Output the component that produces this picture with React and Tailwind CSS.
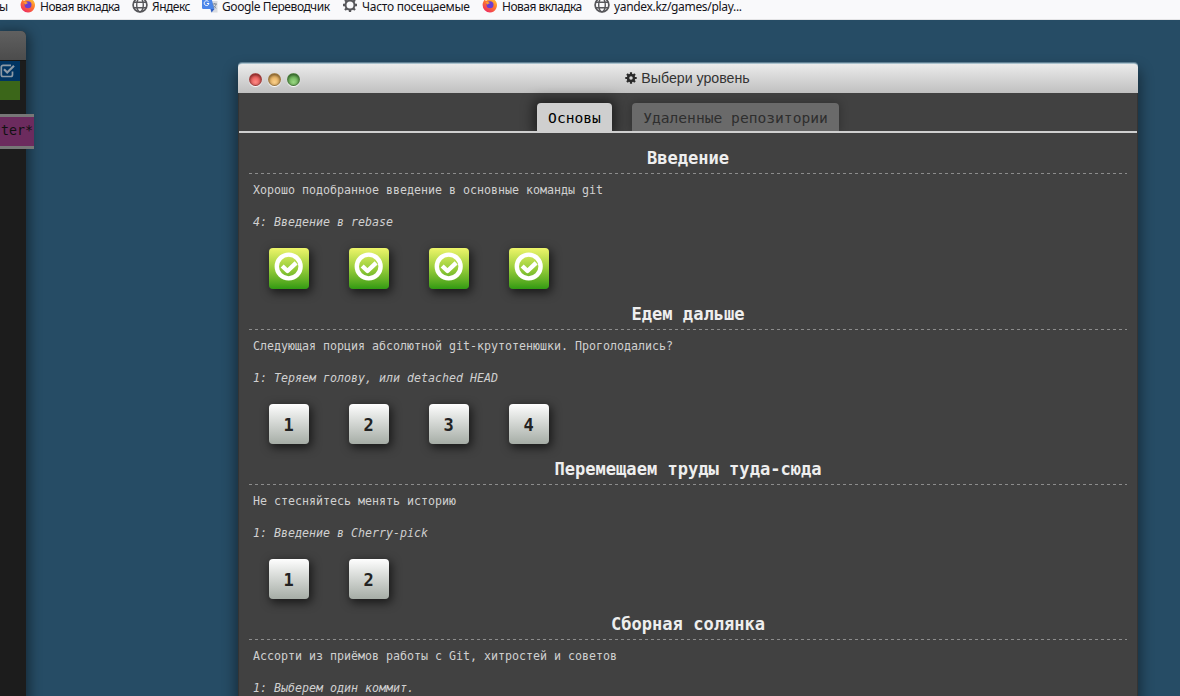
import React from "react";

const Firefox = () => (
  <svg width="16" height="16" viewBox="0 0 16 16" className="shrink-0">
    <defs>
      <linearGradient id="fx" x1="0.8" y1="0" x2="0.2" y2="1">
        <stop offset="0" stopColor="#ffd23c" />
        <stop offset="0.45" stopColor="#ff7a2c" />
        <stop offset="1" stopColor="#ec2466" />
      </linearGradient>
    </defs>
    <path d="M8 15.500A7.400 7.400 0 0 1 .6 8C.6 5.600 1.700 4 2.600 2.600L4 4c1-1 2.500-1.200 4-1L10.500.3c.5 1.700 1.800 2 3.200 3.700A7.400 7.400 0 0 1 8 15.500z" fill="url(#fx)" />
    <circle cx="8" cy="7.800" r="3.500" fill="#6a3fd0" />
    <path d="M3.500 5.500c1.500-.8 3.500-.5 4.500.7-1.500.1-2 .9-2.200 1.500z" fill="#ff9b30" />
  </svg>
);

const Globe = () => (
  <svg width="16" height="16" viewBox="0 0 16 16" className="shrink-0" fill="none" stroke="#57575b" strokeWidth="1.400">
    <circle cx="8" cy="8" r="6.900" strokeWidth="1.700" />
    <ellipse cx="8" cy="8" rx="3.300" ry="6.900" />
    <path d="M1.800 5.300h12.400M1.800 10.700h12.400" />
  </svg>
);

const Translate = () => (
  <svg width="16" height="16" viewBox="0 0 16 16" className="shrink-0">
    <path d="M6 4h9.500v11.500H9z" fill="#d9dbe0" />
    <path d="M0 0h9l3.500 12H1.200A1.200 1.200 0 0 1 0 10.800z" fill="#4b86ea" />
    <path d="M8.500 12h4l-3 3.500z" fill="#2f5fc4" />
    <path d="M6.600 4.800A2.400 2.400 0 1 0 7 6.500H4.900" fill="none" stroke="#fff" strokeWidth="1" />
    <path d="M10.500 7h4.500M12.700 6v1M14 7c-.4 2-1.500 3.200-2.700 4M11.500 8.500c.7 1.300 1.700 2 2.800 2.800" fill="none" stroke="#7d8794" strokeWidth=".9" />
  </svg>
);

const GearOutline = () => (
  <svg width="16" height="16" viewBox="0 0 16 16" className="shrink-0" fill="none" stroke="#57575b">
    <circle cx="8" cy="8" r="4.500" strokeWidth="2" />
    <path d="M8 1v2.500M8 12.500v2.500M1 8h2.500M12.500 8h2.500M3 3l1.800 1.800M11.200 11.200l1.800 1.800M3 13l1.800-1.800M11.200 4.800l1.800-1.800" strokeWidth="2.300" />
  </svg>
);

const GearSolid = () => (
  <svg width="12" height="12" viewBox="0 0 12 12" className="shrink-0" fill="none" stroke="#2a2a2a">
    <circle cx="6" cy="6" r="3" strokeWidth="2.500" />
    <path d="M6 .3v2M6 9.700v2M.3 6h2M9.700 6h2M2 2l1.400 1.400M8.600 8.600L10 10M2 10l1.400-1.400M8.600 3.400L10 2" strokeWidth="2.200" />
  </svg>
);

const bookmarks = [
  { icon: <Firefox />, text: "Новая вкладка", box: "w-[112px] tracking-[-0.52px]" },
  { icon: <Globe />, text: "Яндекс", box: "w-[70px] tracking-[-0.5px]" },
  { icon: <Translate />, text: "Google Переводчик", box: "w-[140px] tracking-[-0.4px]" },
  { icon: <GearOutline />, text: "Часто посещаемые", box: "w-[140px] tracking-[-0.28px]" },
  { icon: <Firefox />, text: "Новая вкладка", box: "w-[112px] tracking-[-0.52px]" },
  { icon: <Globe />, text: "yandex.kz/games/play...", box: "w-[160px] tracking-[-0.32px]" },
];

function Bookmarks() {
  return (
    <div className="flex h-5 shrink-0 items-start whitespace-nowrap border-b border-[#e4e4e6] bg-[#f9f9fb] text-[12px] leading-[13px] text-[#15141a] [font-family:'Noto_Sans','Open_Sans',sans-serif]">
      <span className="w-5 shrink-0 -ml-px mr-px">ы</span>
      {bookmarks.map((b, i) => (
        <div key={i} className={`flex shrink-0 items-start gap-1 ${b.box}`}>
          <span className="-mt-[3px]">{b.icon}</span>
          <span>{b.text}</span>
        </div>
      ))}
    </div>
  );
}

function LeftTerminal() {
  return (
    <div className="flex w-[34px] shrink-0 flex-col pt-[11px]">
      <div className="flex w-[26px] grow flex-col rounded-tr-[5px] bg-[#1c1c1c] shadow-[0_4px_12px_4px_rgba(0,0,0,0.42)]">
        <div className="h-[30px] shrink-0 rounded-tr-[5px] border-b border-[#161616] bg-gradient-to-b from-[#606060] to-[#4c4c4c]" />
        <div className="flex h-5 w-5 shrink-0 items-center bg-[#003462]">
          <svg width="17" height="16" viewBox="0 0 17 16" fill="none" stroke="#8d9aa6" strokeWidth="1.700">
            <path d="M12.500 8.500v3.300a1.700 1.700 0 0 1-1.700 1.700H3a1.700 1.700 0 0 1-1.700-1.700V4A1.700 1.700 0 0 1 3 2.300h8" />
            <path d="M4 6.300l3.200 3.200 6.800-6.800" strokeWidth="2.200" />
          </svg>
        </div>
        <div className="h-[19px] w-5 shrink-0 bg-[#3b6619]" />
        <div className="mt-[14px] flex h-[35px] w-[34px] shrink-0 items-center border-y-[3px] border-[#777] bg-[#6c2b5e] pl-px text-[13.300px] leading-none text-[#111]">
          <span className="-mt-px">ter*</span>
        </div>
      </div>
    </div>
  );
}

const Done = () => (
  <div className="flex h-[41px] w-10 justify-center rounded-[4px] bg-gradient-to-b from-[#eef56a] via-[#97cd3a] to-[#2f9a12] pt-[4px] shadow-[2px_3px_10px_1px_rgba(0,0,0,0.6)]">
    <svg width="30" height="30" viewBox="0 0 30 30" fill="none" stroke="#fff">
      <circle cx="14.700" cy="14.500" r="11.900" strokeWidth="4.400" />
      <path d="M8.200 14l5.300 5 8.600-8.100" strokeWidth="4.400" strokeLinejoin="round" />
    </svg>
  </div>
);

const Level = ({ n }) => (
  <div className="flex h-10 w-10 items-center justify-center rounded-[4px] bg-gradient-to-b from-[#fefefe] to-[#a6ada6] pt-0.5 pr-px text-[17px] font-bold leading-none text-[#222] shadow-[2px_3px_10px_1px_rgba(0,0,0,0.6)]">
    {n}
  </div>
);

const sections = [
  { title: "Введение", desc: "Хорошо подобранное введение в основные команды git", cur: "4: Введение в rebase", count: 4, done: true, h: "h-[156px]" },
  { title: "Едем дальше", desc: "Следующая порция абсолютной git-крутотенюшки. Проголодались?", cur: "1: Теряем голову, или detached HEAD", count: 4, h: "h-[155px]" },
  { title: "Перемещаем труды туда-сюда", desc: "Не стесняйтесь менять историю", cur: "1: Введение в Cherry-pick", count: 2, h: "h-[155px]" },
  { title: "Сборная солянка", desc: "Ассорти из приёмов работы с Git, хитростей и советов", cur: "1: Выберем один коммит.", count: 0, h: "h-[155px]" },
];

function Section({ s }) {
  return (
    <section className={`flex shrink-0 flex-col ${s.h}`}>
      <h3 className="h-[30px] shrink-0 text-center text-[17.070px] font-bold leading-[30px] text-[#eee]">{s.title}</h3>
      <svg width="878" height="1" className="shrink-0">
        <line x1="0" x2="878" y1="0.500" y2="0.500" stroke="#8c8c8c" strokeDasharray="3 3" />
      </svg>
      <p className="mt-2 h-4 shrink-0 pl-1 text-[11.630px] leading-4 text-[#d0d0d0]">{s.desc}</p>
      <p className="mt-4 h-4 shrink-0 pl-1 text-[11.630px] italic leading-4 text-[#d0d0d0]">{s.cur}</p>
      <div className="mt-[18px] flex items-start gap-10 pl-5">
        {Array.from({ length: s.count }, (_, i) => (s.done ? <Done key={i} /> : <Level key={i} n={i + 1} />))}
      </div>
    </section>
  );
}

const Light = ({ c }) => (
  <span className={`h-[13px] w-[13px] rounded-full border border-black/30 shadow-[0_1px_1px_#fff,inset_0_1px_3px_rgba(0,0,0,0.5)] ${c}`} />
);

function LevelWindow() {
  return (
    <div className="flex w-[900px] shrink-0 flex-col rounded-t-[4px] shadow-[0_8px_14px_2px_rgba(0,0,0,0.45)]">
      <div className="grid h-[30px] shrink-0 grid-cols-[1fr_auto_1fr] items-center rounded-t-[4px] border-t border-[#a9c0cc] bg-gradient-to-b from-[#ebebeb] to-[#c0c0c0] shadow-[0_-1px_0_#5f7f92]">
        <div className="flex gap-[6px] pl-[10.500px] pt-px">
          <Light c="bg-[radial-gradient(circle_at_50%_75%,#ff8a85,#d93c3c)]" />
          <Light c="bg-[radial-gradient(circle_at_50%_75%,#fbd08a,#d49a45)]" />
          <Light c="bg-[radial-gradient(circle_at_50%_75%,#9bd883,#4b9a3c)]" />
        </div>
        <div className="flex items-center gap-1 pr-px text-[14.200px] leading-none text-[#333] [font-family:'Liberation_Sans',Arial,sans-serif]">
          <GearSolid />
          <span>Выбери уровень</span>
        </div>
        <div />
      </div>
      <div className="flex grow flex-col border-x border-[#343434] bg-[#414141]">
        <div className="flex h-10 shrink-0 items-end justify-center gap-5 border-b-2 border-[#cfcfcf] text-[14.620px] leading-none">
          <div className="flex h-7 w-[75px] items-center justify-center rounded-t-[4px] bg-[#cfcfcf] pt-0.5 text-black shadow-[0_0_12px_4px_rgba(0,0,0,0.5)] [clip-path:inset(-20px_-20px_0_-20px)]">Основы</div>
          <div className="flex h-7 w-[207px] items-center justify-center rounded-t-[4px] bg-[#6a6a6a] pt-0.5 text-[#2e2e2e] shadow-[0_0_8px_1px_rgba(0,0,0,0.25)] [clip-path:inset(-20px_-20px_0_-20px)]">Удаленные репозитории</div>
        </div>
        <div className="flex flex-col px-[10px] pt-[10px]">
          {sections.map((s) => <Section key={s.title} s={s} />)}
        </div>
      </div>
    </div>
  );
}

export default function App() {
  return (
    <div className="flex h-[696px] w-[1180px] flex-col overflow-hidden bg-[#264c65] [font-family:'DejaVu_Sans_Mono',monospace]">
      <Bookmarks />
      <div className="flex min-h-0 grow overflow-hidden">
        <LeftTerminal />
        <div className="flex grow items-stretch pl-[204px] pt-[43px]">
          <LevelWindow />
        </div>
      </div>
    </div>
  );
}
